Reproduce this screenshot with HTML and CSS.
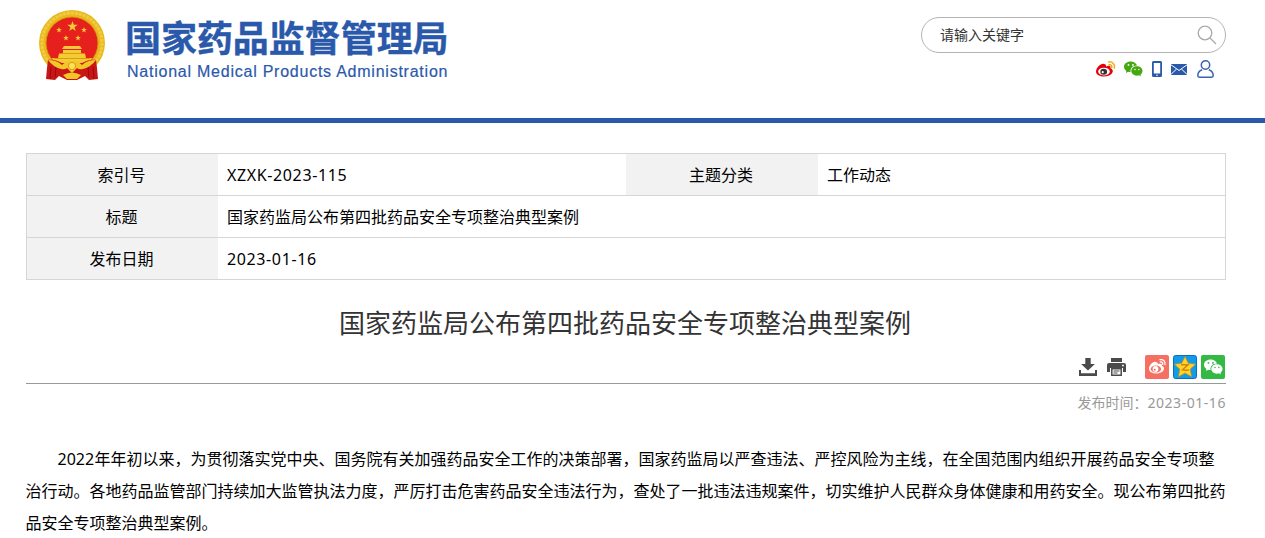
FILE: index.html
```html
<!DOCTYPE html>
<html lang="zh-CN">
<head>
<meta charset="utf-8">
<title>国家药监局公布第四批药品安全专项整治典型案例</title>
<link rel="stylesheet" href="styles.css">
</head>
<body>
<svg class="defs" width="0" height="0" aria-hidden="true">
  <defs>
    <symbol id="star" viewBox="-10 -10 20 20"><path d="M0-10 2.4-3.2 9.5-3.1 3.8 1.2 5.9 8.1 0 4-5.9 8.1-3.8 1.2-9.5-3.1-2.4-3.2z"/></symbol>
    <symbol id="chat" viewBox="0 0 20 16">
      <path d="M7 0C3 0 0 2.5 0 5.700c0 1.800.9 3.300 2.500 4.300L2 12.200l2.500-1.300c.8.2 1.600.3 2.400.3C6.200 7.300 9.400 4.300 13.700 4.400 13 1.800 10.300 0 7 0zM4.700 2.700a1 1 0 1 1 0 2 1 1 0 0 1 0-2zm4.700 0a1 1 0 1 1 0 2 1 1 0 0 1 0-2z" fill-rule="evenodd"/>
      <path d="M13.600 5.200c-3.300 0-5.900 2.200-5.900 4.900s2.600 4.900 5.900 4.900c.8 0 1.500-.1 2.100-.3l2.100 1.200-.5-1.900c1.300-.9 2.200-2.300 2.200-3.900 0-2.700-2.600-4.900-5.900-4.900zm-2 2.600a.8.8 0 1 1 0 1.600.8.8 0 0 1 0-1.600zm4 0a.8.8 0 1 1 0 1.600.8.8 0 0 1 0-1.600z" fill-rule="evenodd"/>
    </symbol>
  </defs>
</svg>
<header class="header">
  <div class="brand">
    <svg class="emblem" width="68" height="72" viewBox="0 0 68 72">
      <circle cx="34" cy="34" r="33" fill="#e8b91d"/>
      <circle cx="34" cy="34" r="30" fill="none" stroke="#f2cb42" stroke-width="3" stroke-dasharray="3 1"/>
      <circle cx="34" cy="34" r="26" fill="#e5201d" stroke="#d9980c" stroke-width=".8"/>
      <g fill="#f3cb35">
        <use href="#star" x="29" y="12" width="11" height="11"/>
        <use href="#star" x="18" y="18" width="6" height="6"/>
        <use href="#star" x="43" y="18" width="6" height="6"/>
        <use href="#star" x="25" y="26" width="6" height="6"/>
        <use href="#star" x="37" y="26" width="6" height="6"/>
        <path d="M24 40l2-3h16l2 3zM25 41h18v3H25zM21 44.500h26l1 4.500H20zM14 49h40l-3 5H17z"/>
      </g>
      <path d="M16 49.500h36M24 44.500h20" stroke="#e09a12"/>
      <path d="M10 51c9-1 16 4 24 10 8-6 15-11 24-10l1 8 1 11-9 1-4-4-8 4H29l-8-4-4 4-9-1 1-11z" fill="#ca1416"/>
      <path d="M13 58l-1 12m6-12-1 10m38-10 1 12m-6-12 1 10" stroke="#8f0b10" fill="none"/>
      <path d="M10 51q9 0 14 5l5-4h10l5 4q5-5 14-5-5 7-13 9-4 1-6-1l-5 5-5-5q-2 2-6 1-8-2-13-9zM25 66q9-5 18 0l-4 4H29z" fill="#f2c528"/>
      <circle cx="34" cy="57" r="3.600" fill="#ffe05a" stroke="#dc9a14"/>
    </svg>
    <div class="brand-text">
      <div class="brand-cn">国家药品监督管理局</div>
      <div class="brand-en">National Medical Products Administration</div>
    </div>
  </div>
  <div class="tools">
    <div class="search">
      <span>请输入关键字</span>
      <svg width="20" height="20" viewBox="0 0 20 20" fill="none" stroke="#aaa" stroke-width="1.300"><circle cx="8" cy="8" r="6.800"/><path d="M13 13l6 6"/></svg>
    </div>
    <div class="links">
      <svg width="20" height="16" viewBox="0 0 20 16">
        <path d="M8 3C5 2 0 7 0 10.500 0 13.800 4 15.500 8.300 15.500c5 0 8.500-2.700 8.500-5.400 0-1.700-1.300-2.500-2.400-2.800.8-2.500-1.200-3-4.400-1.900.5-1.300-.4-2.400-2-2.400z" fill="#e6000c"/>
        <ellipse cx="8" cy="10.600" rx="5.800" ry="3.900" fill="#fff"/>
        <ellipse cx="7.700" cy="10.700" rx="3.400" ry="3" fill="#333"/><circle cx="6.700" cy="11.200" r="1.100" fill="#fff"/>
        <path d="M12.700 1c3.800-.8 6.500 2.500 5.600 6M13 3.700c2-.4 3.200 1.200 2.700 2.800" fill="none" stroke="#efaf15" stroke-width="1.500" stroke-linecap="round"/>
      </svg>
      <svg class="i-chat" width="19" height="16"><use href="#chat" width="19" height="16"/></svg>
      <svg class="i-phone" width="10" height="16" viewBox="0 0 10 16"><path d="M1.500 0h7Q10 0 10 1.500v13Q10 16 8.500 16h-7Q0 16 0 14.500v-13Q0 0 1.500 0zM1.800 2v10.500h6.400V2zM5 13.500a.8.8 0 1 0 0 1.600.8.8 0 0 0 0-1.600z" fill="#2a59ab" fill-rule="evenodd"/></svg>
      <svg class="i-mail" width="16" height="11" viewBox="0 0 16 11"><path d="M0 0h16v11H0z" fill="#2a59ab"/><path d="M0 .8l8 5.700 8-5.700M0 10.300l5.500-5.200M16 10.300l-5.500-5.200" stroke="#fff" fill="none"/></svg>
      <svg class="i-user" width="17" height="18" viewBox="0 0 17 18" fill="none" stroke="#3d61b1" stroke-width="1.500"><circle cx="8.500" cy="5" r="4.200"/><path d="M5.200 9.700C2.500 10.600.8 13 .8 15.500q0 1.700 1.500 1.700h12.400q1.500 0 1.500-1.700c0-2.500-1.700-4.900-4.400-5.800"/></svg>
    </div>
  </div>
</header>
<main class="page">
  <div class="info">
    <div class="label">索引号</div><div class="value latin">XZXK-2023-115</div>
    <div class="label">主题分类</div><div class="value">工作动态</div>
    <div class="label line">标题</div><div class="value line wide">国家药监局公布第四批药品安全专项整治典型案例</div>
    <div class="label line">发布日期</div><div class="value line wide latin">2023-01-16</div>
  </div>
  <h1 class="title">国家药监局公布第四批药品安全专项整治典型案例</h1>
  <div class="actions">
    <svg width="18" height="18" viewBox="0 0 18 18" fill="#4b4b4b"><path d="M6.300 0h5.400v6h4.200L9 12.600 2.100 6h4.200zM0 12h2v3.300h14V12h2v6H0z"/></svg>
    <svg class="i-print" width="19" height="18" viewBox="0 0 19 18"><path d="M4 0h11v4H4zM2 5h15q2 0 2 2v7h-3v-4H3v4H0V7q0-2 2-2z" fill="#4b4b4b"/><path d="M4.800 10.800h9.400v6.400H4.800z" fill="#fff" stroke="#4b4b4b" stroke-width="1.500"/><path d="M6.500 13h6M6.500 15h4" stroke="#4b4b4b"/><circle cx="16" cy="7.500" r=".9" fill="#fff"/></svg>
    <svg class="share" width="24" height="24" viewBox="0 0 24 24">
      <rect width="24" height="24" rx="2" fill="#f56f62"/>
      <path d="M10.500 7C8 6 4 10.500 4 13.800 4 17 7.500 18.500 11.300 18.500c4.700 0 7.700-2.600 7.700-5 0-1.500-1-2.300-2.100-2.600.6-2-1.400-2.600-4-1.600.4-1.300-.8-2.300-2.400-2.300z" fill="#fff"/>
      <ellipse cx="10.900" cy="14" rx="5.200" ry="3.500" fill="#f56f62"/><circle cx="10.500" cy="14" r="2.900" fill="#fff"/><circle cx="9.700" cy="14.700" r="1" fill="#f56f62"/>
      <path d="M15 4.700c3.300-.8 5.700 2 5 5M15.300 7c1.700-.4 2.700.8 2.400 2.300" fill="none" stroke="#fff" stroke-width="1.300" stroke-linecap="round"/>
    </svg>
    <svg class="share-next" width="24" height="24" viewBox="0 0 24 24">
      <rect x=".5" y=".5" width="23" height="23" rx="2" fill="#129be9" stroke="#0871bd"/>
      <path d="M12 1.500l3.200 6.800 7.300.9-5.400 5 1.500 7.500L12 18l-6.600 3.700 1.500-7.500-5.400-5 7.300-.9z" fill="#ffd528" stroke="#d98d12" stroke-width=".7" stroke-linejoin="round"/>
      <path d="M8 9.700h7l-5.500 5.100q3 .8 6.300.1" fill="none" stroke="#d98207" stroke-width="1.500"/>
    </svg>
    <svg class="share-next" width="24" height="24" viewBox="0 0 24 24"><rect width="24" height="24" rx="2" fill="#34b944"/><use href="#chat" x="3" y="4" width="19" height="16" fill="#fff"/></svg>
  </div>
  <div class="date">发布时间：<span>2023-01-16</span></div>
  <p class="article"><span class="year">2022</span>年年初以来，为贯彻落实党中央、国务院有关加强药品安全工作的决策部署，国家药监局以严查违法、严控风险为主线，在全国范围内组织开展药品安全专项整<br>治行动。各地药品监管部门持续加大监管执法力度，严厉打击危害药品安全违法行为，查处了一批违法违规案件，切实维护人民群众身体健康和用药安全。现公布第四批药<br>品安全专项整治典型案例。</p>
</main>
</body>
</html>
```
FILE: styles.css
```css
* { box-sizing: border-box; }
body {
  margin: 0;
  height: 538px;
  overflow: hidden;
  background: #fff;
  color: #000;
  font: 16px/32px "Noto Sans", "Noto Sans CJK SC", sans-serif;
}
svg { display: block; flex: none; }
.defs { display: none; }
.header {
  display: flex;
  justify-content: space-between;
  height: 123px;
  padding: 0 39px 0 38px;
  border-bottom: 5px solid #2a59ab;
}
.brand { display: flex; padding-top: 9px; }
.brand-text { padding: 2px 0 0 19px; color: #2a59ab; white-space: nowrap; }
.brand-cn { font: 700 36px/50px "Noto Sans CJK SC", sans-serif; letter-spacing: -.05px; -webkit-text-stroke: .4px #2a59ab; }
.brand-en { font: 16px/20px "Liberation Sans", Arial, sans-serif; letter-spacing: .76px; margin: 1px 0 0 2px; -webkit-text-stroke: .2px #2a59ab; }
.tools { width: 305px; padding-top: 17px; }
.search {
  display: flex;
  align-items: center;
  justify-content: space-between;
  height: 36px;
  padding: 0 8px 0 18px;
  border: 1px solid #b3b3b3;
  border-radius: 18px;
  color: #333;
  font: 14px/32px "Noto Sans CJK SC", sans-serif;
}
.search span { padding-bottom: 2px; }
.links { display: flex; align-items: center; padding: 7px 0 0 175px; height: 25px; }
.i-chat { margin-left: 8px; fill: #44a911; }
.i-phone { margin-left: 9px; }
.i-mail { margin-left: 9px; }
.i-user { margin-left: 10px; }
.page { width: 1200px; margin: 30px 0 0 26px; }
.info {
  display: grid;
  grid-template-columns: 191px 408px 192px 1fr;
  grid-template-rows: 41px 42px 42px;
  border: 1px solid #d6d6d6;
  line-height: 40px;
  font-family: "Noto Sans CJK SC", sans-serif;
}
.label { background: #f2f2f2; padding-right: 2px; text-align: center; }
.value { padding-left: 9px; }
.wide { grid-column: 2 / -1; }
.line { border-top: 1px solid #d6d6d6; }
.latin { font-family: "Noto Sans", sans-serif; line-height: 42px; letter-spacing: .62px; }
.title {
  margin: 21px 1px 1px -1px;
  color: #333;
  font: 400 26px/42px "Noto Sans CJK SC", sans-serif;
  text-align: center;
}
.actions {
  display: flex;
  align-items: center;
  justify-content: flex-end;
  height: 40px;
  padding: 6px 1px 0 0;
  border-bottom: 1px solid #999;
}
.i-print { margin-left: 10px; }
.share { margin-left: 19px; }
.share-next { margin-left: 4px; }
.date { color: #999; font: 14px/38px "Noto Sans", "Noto Sans CJK SC", sans-serif; text-align: right; }
.date span { letter-spacing: .55px; }
.article { margin: 21px 0 0 -.5px; text-indent: 32px; white-space: nowrap; }
.year { display: inline-block; width: 37px; text-indent: 0; }
```
